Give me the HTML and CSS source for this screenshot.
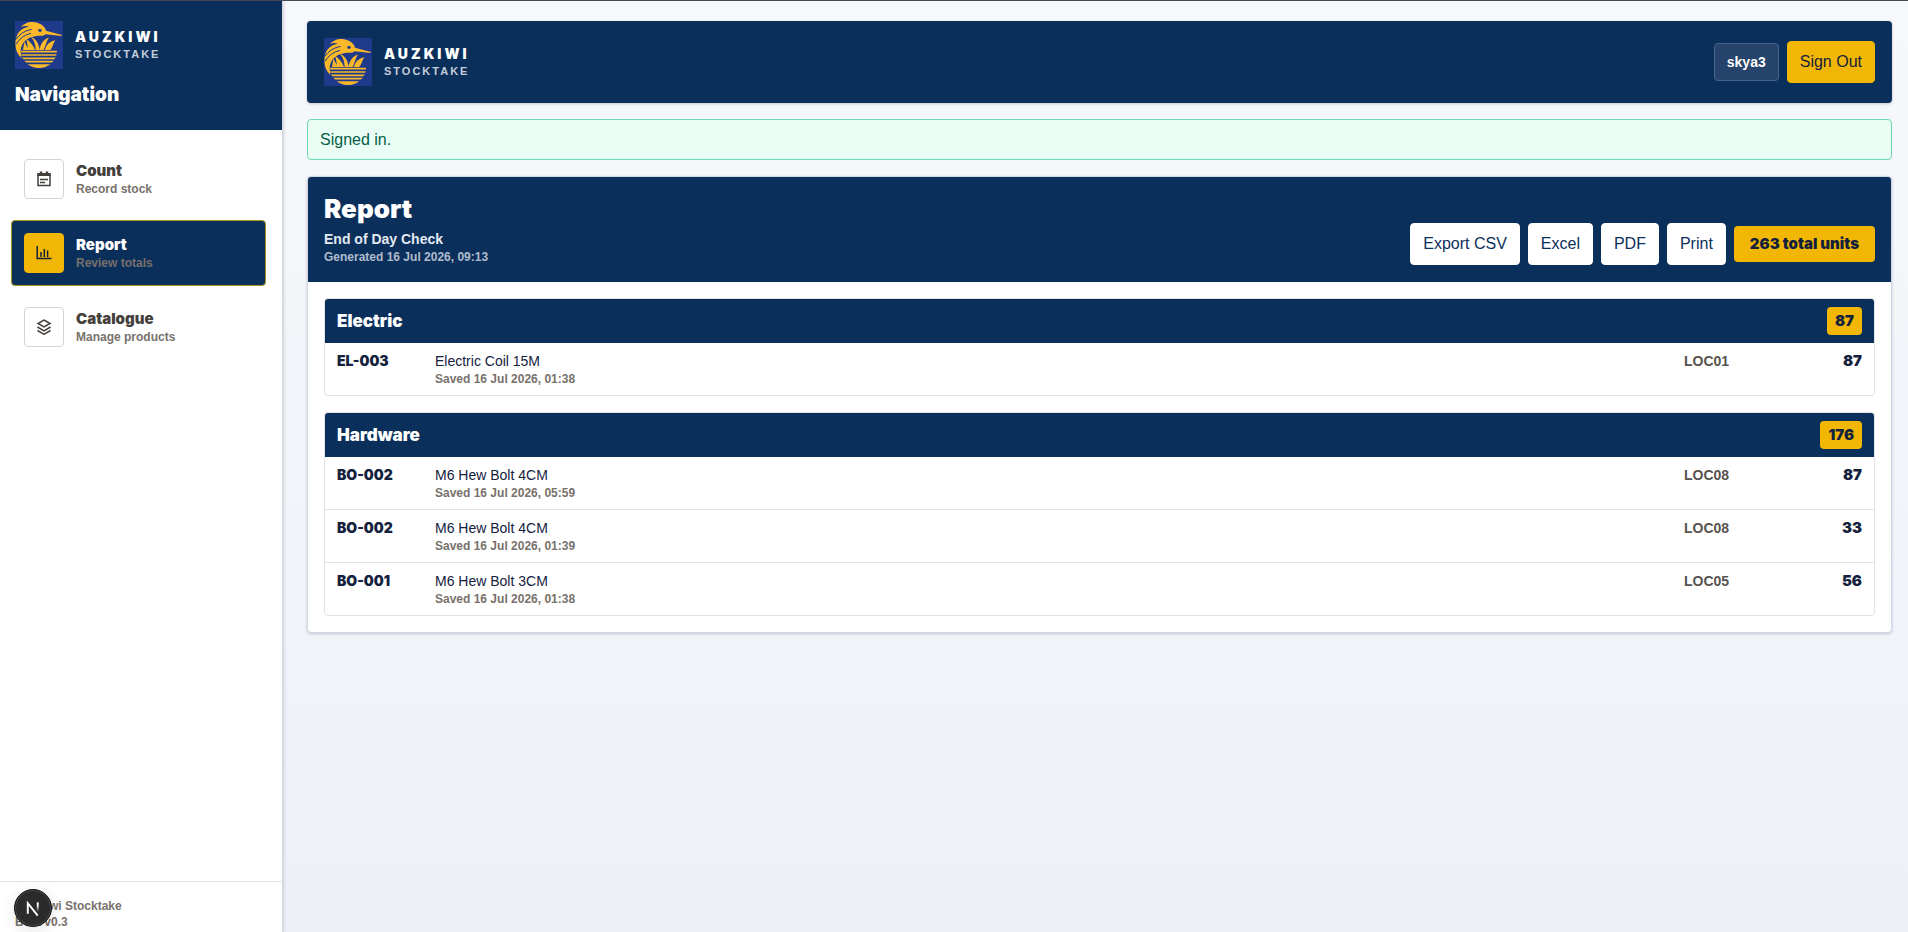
FILE: index.html
```html
<!DOCTYPE html>
<html lang="en">
<head>
  <meta charset="UTF-8">
  <meta name="viewport" content="width=device-width, initial-scale=1">
  <title>AuzKiwi Stocktake</title>
  <link rel="stylesheet" href="styles.css">
</head>
<body>
  <svg class="sprite" aria-hidden="true">
    <symbol id="logo" viewBox="0 0 144 144">
      <rect width="144" height="144" fill="#1f3a8a"/>
      <g fill="#fbb92a">
        <path d="M3 84C0 70 1 56 5 46C9 32 22 20 42 17C33 14 25 15 18 19C26 7 44 1 60 4C78 7 90 17 93 29L141 42L139 45L92 40C84 47 72 43 60 46C36 50 20 64 17 88C16 96 19 104 24 114C12 106 5 94 3 84Z"/>
        <path d="M24 87L28 62L42 87ZM40 87L34 54Q52 66 60 87ZM62 87C62 72 57 58 48 48C62 53 72 66 74 87ZM74 87C76 68 86 56 102 49C95 60 92 74 86 87ZM90 87C94 70 104 62 121 58C114 66 114 78 106 87Z"/>
        <path d="M18 89H126A54 52 0 0 1 18 89Z"/>
      </g>
      <g fill="none" stroke="#1f3a8a">
        <path d="M2 56Q20 30 50 25M3 70Q18 44 48 37" stroke-width="3"/>
        <path d="M18 97H126M18 107H126M22 117H122M28 127H114" stroke-width="5"/>
      </g>
      <circle cx="75" cy="28" r="5" fill="#1f3a8a"/>
    </symbol>
  </svg>

  <div class="app">
    <aside class="sidebar">
      <div class="sidebar-header">
        <div class="brand">
          <svg class="brand-logo"><use href="#logo"/></svg>
          <div>
            <div class="brand-name">AUZKIWI</div>
            <div class="brand-sub">STOCKTAKE</div>
          </div>
        </div>
        <h2>Navigation</h2>
      </div>

      <nav class="nav">
        <a class="nav-item" href="#count">
          <span class="nav-icon">
            <svg viewBox="0 0 16 16" fill="none" stroke="currentColor">
              <path d="M2 3V14.500H14V3" stroke-width="1.500"/>
              <path d="M1.300 3.500H14.700" stroke-width="3"/>
              <path d="M5 0.500V3M11 0.500V3" stroke-width="2.500"/>
              <path d="M4 8.500H12M4 11.500H9" stroke-width="1.500"/>
            </svg>
          </span>
          <span><strong>Count</strong><small>Record stock</small></span>
        </a>
        <a class="nav-item active" href="#report">
          <span class="nav-icon">
            <svg viewBox="0 0 16 16" fill="none" stroke="currentColor" stroke-width="1.500">
              <path d="M1.200 1V13.500H15.500M5 7V12M8.300 4V12M11.600 5.500V12"/>
            </svg>
          </span>
          <span><strong>Report</strong><small>Review totals</small></span>
        </a>
        <a class="nav-item" href="#catalogue">
          <span class="nav-icon">
            <svg viewBox="0 0 16 16" fill="none" stroke="currentColor" stroke-width="1.500">
              <path d="M8 1L14 4.500L8 8L2 4.500ZM1.500 8L8 11.800L14.500 8M1.500 11.500L8 15.300L14.500 11.500"/>
            </svg>
          </span>
          <span><strong>Catalogue</strong><small>Manage products</small></span>
        </a>
      </nav>

      <footer class="sidebar-footer">
        AuzKiwi Stocktake<br>Beta v0.3
      </footer>
    </aside>

    <main class="main">
      <header class="topbar">
        <div class="brand">
          <svg class="brand-logo"><use href="#logo"/></svg>
          <div>
            <div class="brand-name">AUZKIWI</div>
            <div class="brand-sub">STOCKTAKE</div>
          </div>
        </div>
        <div class="actions">
          <span class="user">skya3</span>
          <button class="btn btn-gold" type="button">Sign Out</button>
        </div>
      </header>

      <div class="notice" role="status">Signed in.</div>

      <section class="card">
        <div class="card-header">
          <div>
            <h1>Report</h1>
            <p class="check-name">End of Day Check</p>
            <p class="generated">Generated 16 Jul 2026, 09:13</p>
          </div>
          <div class="actions">
            <button class="btn" type="button">Export CSV</button>
            <button class="btn" type="button">Excel</button>
            <button class="btn" type="button">PDF</button>
            <button class="btn" type="button">Print</button>
            <span class="total">263 total units</span>
          </div>
        </div>

        <div class="card-body">
          <section class="group">
            <div class="group-header">
              <h3>Electric</h3>
              <span class="group-count">87</span>
            </div>
            <table class="stock">
              <tr>
                <td class="code">EL-003</td>
                <td>Electric Coil 15M<small>Saved 16 Jul 2026, 01:38</small></td>
                <td class="location">LOC01</td>
                <td class="qty">87</td>
              </tr>
            </table>
          </section>

          <section class="group">
            <div class="group-header">
              <h3>Hardware</h3>
              <span class="group-count">176</span>
            </div>
            <table class="stock">
              <tr>
                <td class="code">BO-002</td>
                <td>M6 Hew Bolt 4CM<small>Saved 16 Jul 2026, 05:59</small></td>
                <td class="location">LOC08</td>
                <td class="qty">87</td>
              </tr>
              <tr>
                <td class="code">BO-002</td>
                <td>M6 Hew Bolt 4CM<small>Saved 16 Jul 2026, 01:39</small></td>
                <td class="location">LOC08</td>
                <td class="qty">33</td>
              </tr>
              <tr>
                <td class="code">BO-001</td>
                <td>M6 Hew Bolt 3CM<small>Saved 16 Jul 2026, 01:38</small></td>
                <td class="location">LOC05</td>
                <td class="qty">56</td>
              </tr>
            </table>
          </section>
        </div>
      </section>
    </main>
  </div>

  <button class="dev-badge" type="button" aria-label="Open dev tools">
    <svg viewBox="0 0 38 38" fill="none" stroke-width="2">
      <defs>
        <linearGradient id="fade" x1="0" y1="0" x2="0" y2="1">
          <stop offset="0.3" stop-color="#fff"/>
          <stop offset="1" stop-color="#fff" stop-opacity="0"/>
        </linearGradient>
      </defs>
      <path d="M13.500 25V14L24 27" stroke="#fff"/>
      <rect x="23" y="13" width="2" height="10" fill="url(#fade)"/>
    </svg>
  </button>
</body>
</html>
```

FILE: styles.css
```css
* {
  box-sizing: border-box;
}

body {
  margin: 0;
  border-top: 1px solid #454754;
  background: linear-gradient(#f7f8fc, #edf1f7);
  color: #14213d;
  font-family: "Liberation Sans", Arial, sans-serif;
  font-size: 16px;
  line-height: 24px;
}

h1, h2, h3, p {
  margin: 0;
}

h1, h2, h3, strong, .brand-name, .total, .group-count, .code, .qty {
  font-family: "Arial Black", Inter, "Liberation Sans", sans-serif;
  font-weight: 900;
}

small {
  display: block;
  color: #78716c;
  font-size: 12px;
  font-weight: bold;
  line-height: 16px;
}

.sprite {
  display: none;
}

.app {
  display: flex;
  min-height: calc(100vh - 1px);
}

/* sidebar */
.sidebar {
  display: flex;
  flex-direction: column;
  flex: none;
  width: 283px;
  background: #fff;
  border-right: 1px solid #d3d8e0;
  box-shadow: 1px 0 3px rgba(15, 23, 42, 0.15);
}

.sidebar-header {
  padding: 20px 15px 21px;
  background: #0b2f5b;
  color: #fff;
}

.sidebar-header h2 {
  margin-top: 12px;
  font-size: 19px;
  line-height: 28px;
}

.brand {
  display: flex;
  align-items: center;
  gap: 12px;
}

.brand-logo {
  width: 48px;
  height: 48px;
}

.brand-name {
  color: #fff;
  font-size: 14px;
  line-height: 18px;
  letter-spacing: 3px;
}

.brand-sub {
  color: #c3cedc;
  font-size: 11px;
  font-weight: bold;
  line-height: 16px;
  letter-spacing: 2px;
}

.nav {
  display: flex;
  flex-direction: column;
  gap: 8px;
  padding: 16px 16px 16px 11px;
}

.nav-item {
  display: flex;
  align-items: center;
  gap: 12px;
  padding: 12px;
  border: 1px solid transparent;
  border-radius: 4px;
  color: #44403c;
  text-decoration: none;
}

.nav-item strong {
  display: block;
  font-size: 15px;
  line-height: 20px;
}

.nav-icon {
  display: grid;
  place-items: center;
  width: 40px;
  height: 40px;
  border: 1px solid #d6d3d1;
  border-radius: 4px;
  background: #fff;
}

.nav-icon svg {
  width: 16px;
  height: 16px;
}

.active {
  background: #0b2f5b;
  border-color: #a99519;
  color: #fff;
}

.active .nav-icon {
  background: #f2b705;
  border-color: #f2b705;
  color: #14213d;
}

.sidebar-footer {
  margin-top: auto;
  padding: 16px 15px 2px;
  border-top: 1px solid #dfe3e6;
  color: #78716c;
  font-size: 12px;
  font-weight: bold;
  line-height: 16px;
}

/* main column */
.main {
  display: flex;
  flex-direction: column;
  flex: 1;
  gap: 16px;
  padding: 20px 16px 20px 24px;
}

.topbar {
  display: flex;
  align-items: center;
  justify-content: space-between;
  padding: 17px;
  border-radius: 4px;
  background: #0b2f5b;
  box-shadow: 0 1px 3px rgba(15, 23, 42, 0.2);
}

.actions {
  display: flex;
  align-items: center;
  gap: 8px;
}

.user {
  padding: 8px 12px;
  border: 1px solid #48648a;
  border-radius: 4px;
  background: #25436b;
  color: #fff;
  font-size: 14px;
  font-weight: bold;
  line-height: 20px;
}

.btn {
  padding: 8px 12px;
  border: 1px solid #fff;
  border-radius: 4px;
  background: #fff;
  color: #0b2f5b;
  font: inherit;
  cursor: pointer;
}

.btn-gold {
  background: #f2b705;
  border-color: #f2b705;
  color: #14213d;
}

.notice {
  padding: 8px 12px 7px;
  border: 1px solid #6ed8b5;
  border-radius: 4px;
  background: #eafdf5;
  color: #065f46;
}

.card {
  overflow: hidden;
  border: 1px solid #cfd8e6;
  border-radius: 4px;
  background: #fff;
  box-shadow: 0 1px 3px rgba(15, 23, 42, 0.2);
}

.card-header {
  display: flex;
  align-items: flex-end;
  justify-content: space-between;
  padding: 16px 16px 17px;
  background: #0b2f5b;
  color: #fff;
}

.card-header h1 {
  margin-bottom: 4px;
  font-size: 26px;
  line-height: 32px;
}

.check-name {
  color: #e2e9f2;
  font-size: 14px;
  font-weight: bold;
  line-height: 20px;
}

.generated {
  color: #aebccd;
  font-size: 12px;
  font-weight: bold;
  line-height: 16px;
}

.total {
  padding: 8px 16px;
  border-radius: 4px;
  background: #f2b705;
  color: #14213d;
  font-size: 15px;
  line-height: 20px;
}

.card-body {
  display: flex;
  flex-direction: column;
  gap: 16px;
  padding: 16px;
}

.group {
  overflow: hidden;
  border: 1px solid #e0e2e6;
  border-radius: 4px;
}

.group-header {
  display: flex;
  align-items: center;
  justify-content: space-between;
  padding: 8px 12px;
  background: #0b2f5b;
  color: #fff;
}

.group-header h3 {
  font-size: 17px;
}

.group-count {
  padding: 4px 8px;
  border-radius: 4px;
  background: #f2b705;
  color: #14213d;
  font-size: 15px;
  line-height: 20px;
}

.stock {
  width: 100%;
  border-collapse: collapse;
  table-layout: fixed;
  font-size: 14px;
  line-height: 20px;
}

.stock td {
  padding: 8px 0;
  vertical-align: top;
}

.stock tr + tr td {
  border-top: 1px solid #e0e2e6;
}

.stock .code {
  width: 110px;
  padding-left: 12px;
}

.stock .location {
  width: 90px;
  color: #57534e;
  font-weight: bold;
}

.stock .qty {
  width: 100px;
  padding-right: 12px;
  font-size: 15px;
  text-align: right;
}

/* floating badge in the corner */
.dev-badge {
  position: fixed;
  left: 14px;
  bottom: 5px;
  width: 38px;
  height: 38px;
  padding: 0;
  border: 1px solid #111;
  border-radius: 50%;
  background: #2b2b2b;
  box-shadow: inset 0 0 0 1px #4a4a4a, 0 4px 16px rgba(0, 0, 0, 0.1);
}

.dev-badge svg {
  display: block;
  width: 36px;
  height: 36px;
}
```
